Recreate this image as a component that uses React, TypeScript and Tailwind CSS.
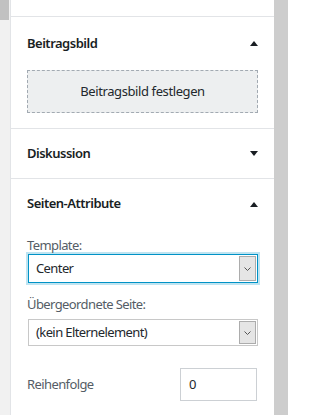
import React from 'react';

const font = { fontFamily: '"Noto Sans", "Open Sans", "Liberation Sans", sans-serif' };

function Caret({ up }: { up?: boolean }) {
  return (
    <svg width="8" height="5" viewBox="0 0 8 5" className="shrink-0">
      {up ? <polygon points="0,5 8,5 4,0" fill="#191e23" /> : <polygon points="0,0 8,0 4,5" fill="#191e23" />}
    </svg>
  );
}

function PanelHeader({ title, up, h }: { title: string; up?: boolean; h: string }) {
  return (
    <div className={`flex items-center justify-between px-4 ${h}`}>
      <span className="text-[13px] font-semibold tracking-[-0.5px] text-[#191e23]">{title}</span>
      <Caret up={up} />
    </div>
  );
}

function FakeSelect({ value, focused }: { value: string; focused?: boolean }) {
  return (
    <div
      className={
        focused
          ? 'flex h-[29px] items-stretch border border-[#0092c6] bg-white shadow-[0_0_0_2px_#bfe4f1]'
          : 'flex h-[27px] items-stretch border border-[#c8c8c8] bg-white'
      }
    >
      <span className="flex flex-1 items-center pl-[7px] text-[13px] text-[#23282d]">{value}</span>
      <span className="my-px mr-px flex w-[17px] items-center justify-center border border-[#acacac] bg-[#e5e5e5]">
        <svg width="7" height="4" viewBox="0 0 7 4">
          <polyline points="0.5,0.5 3.5,3.5 6.5,0.5" fill="none" stroke="#555" strokeWidth="1" />
        </svg>
      </span>
    </div>
  );
}

export default function App() {
  return (
    <div className="flex h-[415px] w-[288px] overflow-hidden bg-white tracking-[-0.4px]" style={font}>
      {/* linke Scrollleiste */}
      <div className="w-[10px] shrink-0 bg-[#f1f1f1]">
        <div className="h-[20px] w-[9px] bg-[#c1c1c1]" />
      </div>
      <div className="w-px shrink-0 bg-[#e2e4e7]" />

      {/* Seitenleiste */}
      <div className="flex w-[263px] shrink-0 flex-col">
        <div className="h-[16px]" />
        <div className="h-px bg-[#e2e4e7]" />

        <PanelHeader title="Beitragsbild" up h="h-[53px]" />
        <div className="px-4 pb-[15px]">
          <button className="flex h-[43px] w-full items-center justify-center border border-dashed border-[#a2aab2] bg-[#edeff0] text-[13px] text-[#23282d]">
            Beitragsbild festlegen
          </button>
        </div>
        <div className="h-px bg-[#e2e4e7]" />

        <PanelHeader title="Diskussion" h="h-[49px]" />
        <div className="h-px bg-[#e2e4e7]" />

        <PanelHeader title="Seiten-Attribute" up h="h-[50px]" />
        <div className="px-4 tracking-[-0.6px]">
          <div className="mt-[7px] h-[18px] text-[13px] leading-[18px] text-[#555d66]">Template:</div>
          <div className="ml-px">
            <FakeSelect value="Center" focused />
          </div>
          <div className="mt-[12px] h-[18px] text-[13px] leading-[18px] text-[#555d66]">Übergeordnete Seite:</div>
          <div className="ml-px mt-[6px]">
            <FakeSelect value="(kein Elternelement)" />
          </div>
          <div className="mt-[22px] flex items-center justify-between pr-[1px]">
            <span className="text-[13px] text-[#555d66]">Reihenfolge</span>
            <div className="flex h-[33px] w-[77px] items-center border border-[#ccd0d4] pl-[8px] text-[13px] text-[#23282d]">
              0
            </div>
          </div>
        </div>
      </div>

      {/* rechte Scrollleiste */}
      <div className="flex-1 bg-[#cdcdcd]" />
    </div>
  );
}
